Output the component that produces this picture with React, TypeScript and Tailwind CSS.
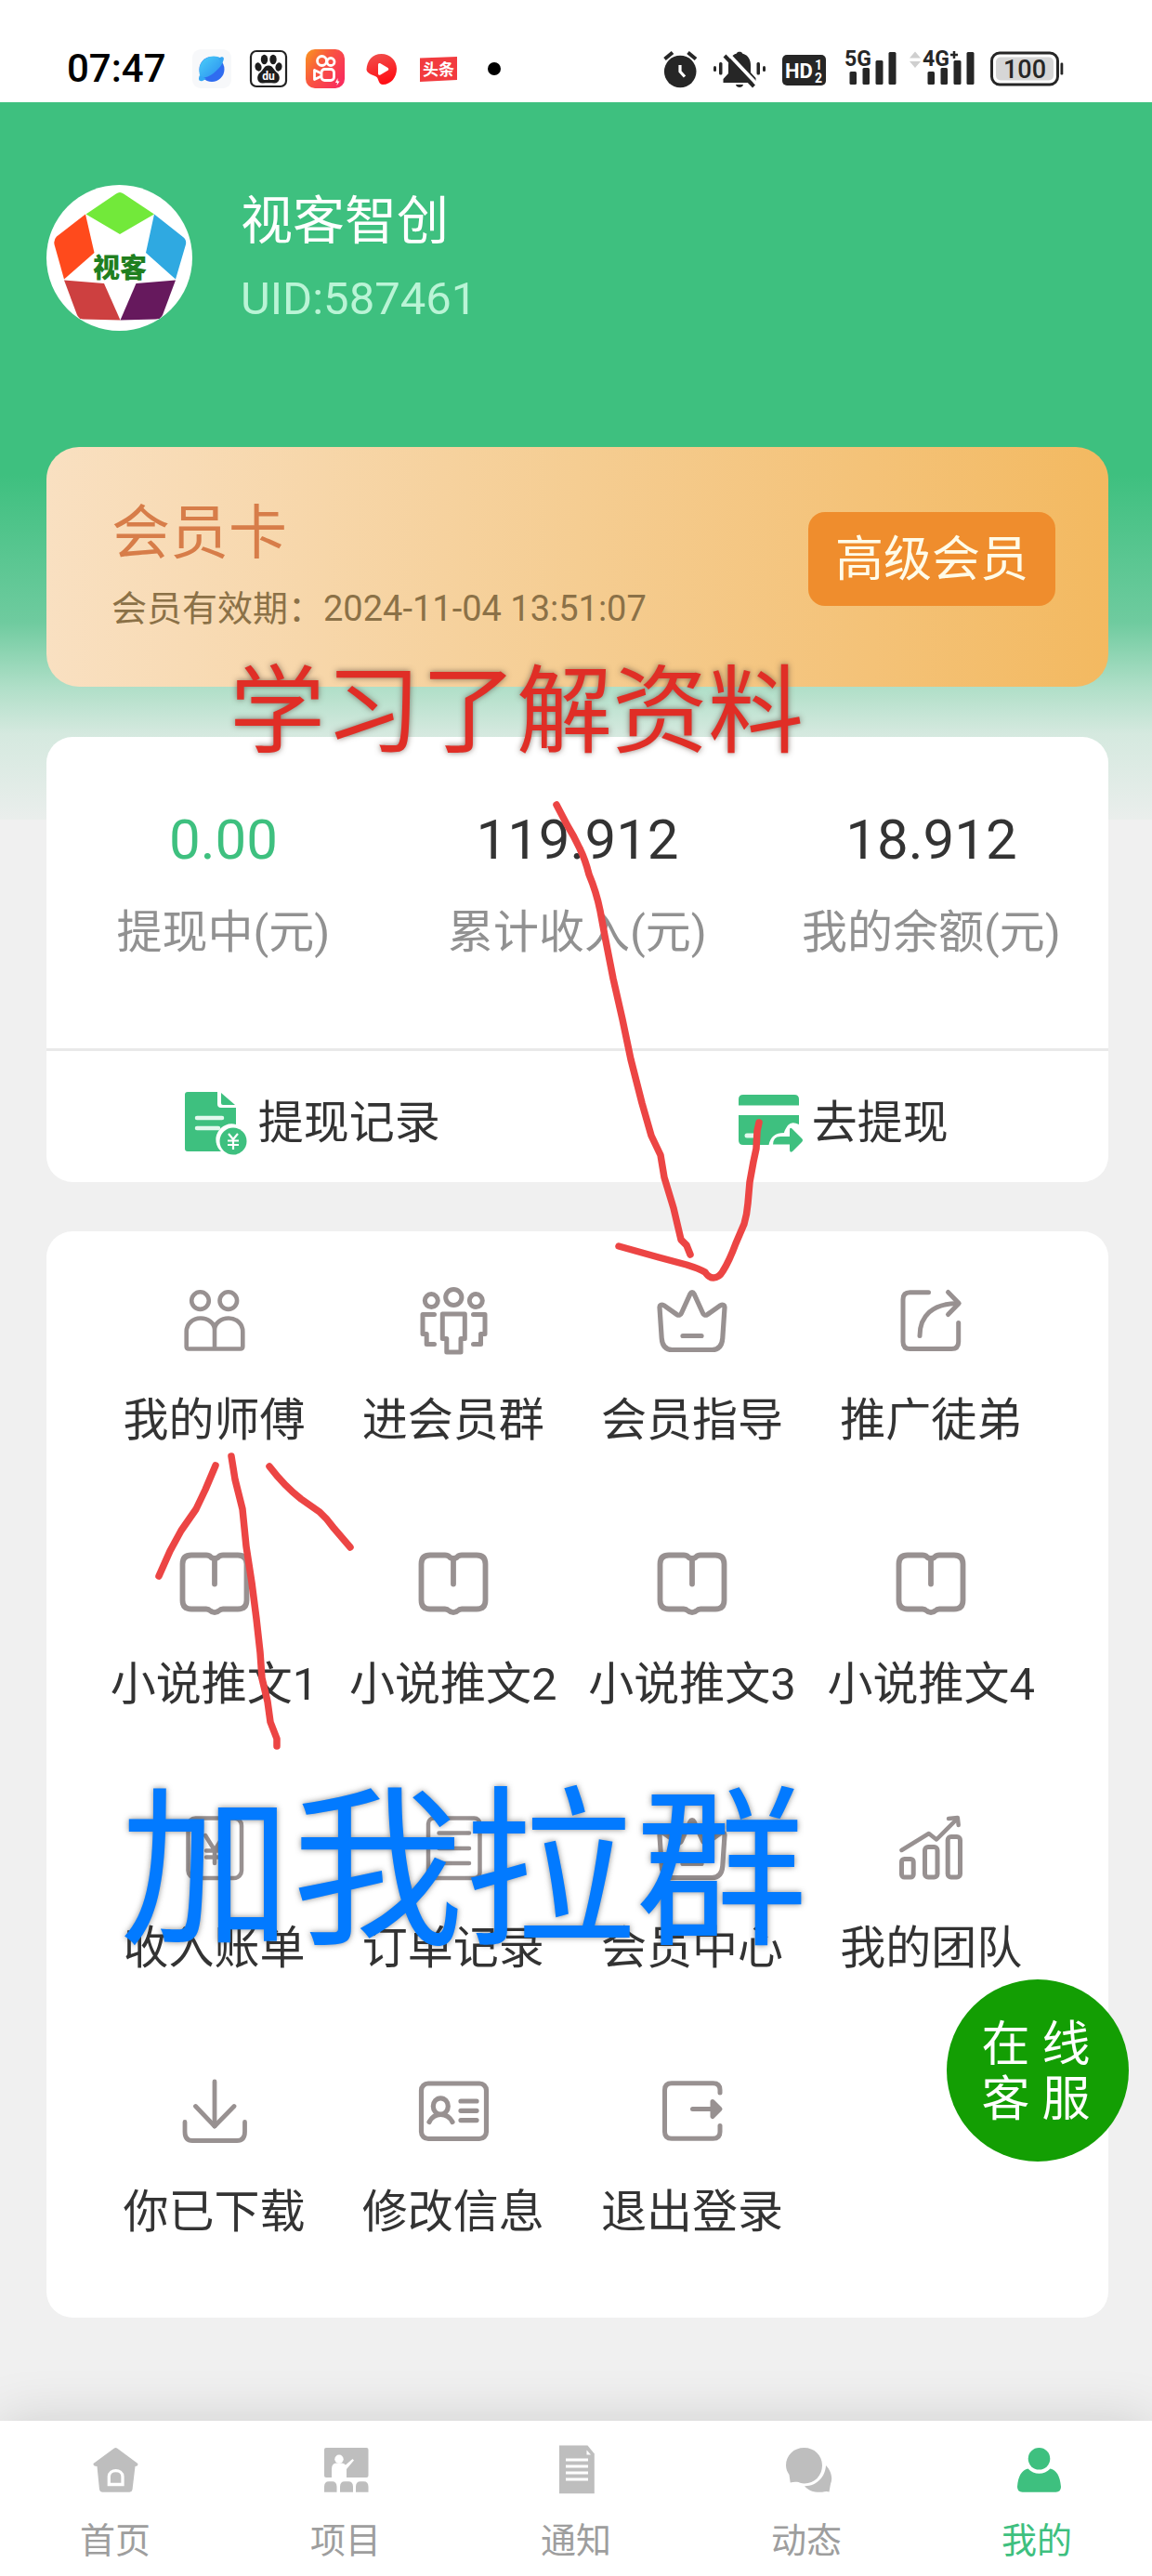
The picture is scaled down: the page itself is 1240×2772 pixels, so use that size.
import React from 'react'

type IconProps = { className?: string }

type MenuItem = {
  label: string
  icon: React.ReactNode
}

/* ---------- status bar ---------- */

function AppIcons() {
  return (
    <div className="flex items-center gap-[19px]">
      <svg viewBox="0 0 42 42" className="size-[42px]" aria-hidden="true">
        <defs>
          <linearGradient id="planet" x1="0" y1="0" x2="1" y2="1">
            <stop offset="0" stopColor="#4bd0f8" />
            <stop offset="1" stopColor="#2a8cf0" />
          </linearGradient>
        </defs>
        <rect width="42" height="42" rx="9" fill="#f7f8fa" />
        <circle cx="21" cy="21.500" r="13.500" fill="#2f6cf0" />
        <path d="M31 10 C24 5 12 8 8.500 17 C7 22 7 27 9.500 31 C19 31 29 22 32.500 13 Z" fill="url(#planet)" />
        <path d="M28 10 C32 7 35 8 33.500 12 C32 17 29 20 27 22 L30 13 Z" fill="#35a5f2" />
        <path d="M8 28 C6 32 7 35 11 34 L15 32 Z" fill="#33a8f4" />
      </svg>
      <svg viewBox="0 0 42 42" className="size-[42px]" aria-hidden="true">
        <rect x="2" y="2" width="38" height="38" rx="6" fill="#fff" stroke="#222" strokeWidth="2.200" />
        <g fill="#1d1d1d">
          <ellipse cx="16.500" cy="11" rx="3.700" ry="5.200" />
          <ellipse cx="26" cy="11" rx="3.700" ry="5.200" />
          <ellipse cx="10" cy="19" rx="3.500" ry="4.700" transform="rotate(-15 10 19)" />
          <ellipse cx="32" cy="19" rx="3.500" ry="4.700" transform="rotate(15 32 19)" />
          <path d="M21 17.500 C26 17.500 26 22 30 25 C35 29 33 37 27 36.500 C23 36 19 36 15 36.500 C9 37 7 29 12 25 C16 22 16 17.500 21 17.500 Z" />
        </g>
        <text x="21" y="33" textAnchor="middle" fontFamily="Roboto" fontSize="12" fontWeight="700" fill="#fff">du</text>
      </svg>
      <svg viewBox="0 0 42 42" className="size-[42px]" aria-hidden="true">
        <defs>
          <linearGradient id="kuai" x1="0" y1="0" x2="1" y2="0.700">
            <stop offset="0" stopColor="#f9971f" />
            <stop offset="0.450" stopColor="#f9573f" />
            <stop offset="1" stopColor="#f92d5c" />
          </linearGradient>
        </defs>
        <rect width="42" height="42" rx="10" fill="url(#kuai)" />
        <g fill="none" stroke="#fff" strokeWidth="2.800">
          <circle cx="17.500" cy="12.500" r="5" />
          <circle cx="27" cy="13.500" r="4" />
          <rect x="17" y="21.500" width="13.500" height="12" rx="3.500" />
          <path d="M17 26 L9.500 22.500 V32.500 L17 29" strokeLinejoin="round" />
        </g>
        <path d="M34.500 31 L32 36 H34 L33.500 39 L36.500 34.500 H34.500 Z" fill="#fff" />
      </svg>
      <svg viewBox="0 0 42 42" className="size-[42px]" aria-hidden="true">
        <defs>
          <linearGradient id="play" x1="0" y1="0" x2="0.300" y2="1">
            <stop offset="0" stopColor="#ef5350" />
            <stop offset="1" stopColor="#ff1016" />
          </linearGradient>
        </defs>
        <path d="M20.500 5 C30 5 37 12 37 21 C37 30 31 38 22 38 C18 38 18 34 16 30.500 C14 28 5 27 4.500 22 C5 12 11 5 20.500 5 Z" fill="url(#play)" />
        <path d="M17 16.500 C17 15 18.500 14.500 19.500 15.300 L27.500 20 C28.500 21 28.500 22 27.500 22.800 L19.500 27.500 C18 28.300 17 27.500 17 26 Z" fill="#fff" />
      </svg>
      <svg viewBox="0 0 42 42" className="size-[42px]" aria-hidden="true">
        <path d="M1 9.500 L41 8 V33 L1 35 Z" fill="#f23b3f" />
        <text x="21" y="28" textAnchor="middle" fontFamily="'Noto Sans CJK SC', sans-serif" fontSize="17" fontWeight="700" fill="#fff">头条</text>
      </svg>
    </div>
  )
}

function AlarmIcon() {
  return (
    <svg viewBox="0 0 38 42" className="h-[42px] w-[38px]" aria-hidden="true">
      <g stroke="#262626" strokeWidth="4">
        <path d="M1.500 10.500 L10 3.500" />
        <path d="M26.500 3.500 L35 10.500" />
      </g>
      <circle cx="18.200" cy="24" r="17.300" fill="#262626" />
      <path d="M18 17 V24 L23 29.500" fill="none" stroke="#fff" strokeWidth="3.200" />
    </svg>
  )
}

function MuteIcon() {
  return (
    <svg viewBox="0 0 58 42" className="h-[42px] w-[58px]" aria-hidden="true">
      <g fill="#262626">
        <path d="M25 4.500 C25 2 31 2 31 4.500 C38 6.500 40 12 40 17 V25 L45.500 31 V36 H10.500 V32 L16 26 V17 C16 11 19 6.500 25 4.500 Z" />
        <path d="M24 38 H32 C31.500 42 24.500 42 24 38 Z" />
        <rect x="0" y="18" width="3" height="6" rx="1.500" />
        <rect x="6" y="14" width="3.500" height="13.500" rx="1.500" />
        <rect x="46.500" y="14" width="3.500" height="13.500" rx="1.500" />
        <rect x="53" y="18" width="3" height="6" rx="1.500" />
      </g>
      <path d="M15 4 L47 38" stroke="#fff" strokeWidth="4" />
      <path d="M12 7 L43.500 40" stroke="#262626" strokeWidth="4" />
    </svg>
  )
}

function HdIcon() {
  return (
    <svg viewBox="0 0 50 42" className="h-[42px] w-[50px]" aria-hidden="true">
      <rect x="0" y="6" width="47" height="33" rx="5" fill="#262626" />
      <g fontFamily="Roboto" fontWeight="700" fill="#fff">
        <text x="3" y="30.500" fontSize="22">HD</text>
        <text x="35" y="21.500" fontSize="14">1</text>
        <text x="35" y="35.500" fontSize="14">2</text>
      </g>
    </svg>
  )
}

function SignalIcons() {
  return (
    <svg viewBox="0 0 142 42" className="h-[42px] w-[142px] overflow-visible" aria-hidden="true">
      <g fill="#262626">
        <rect x="6.500" y="24" width="7.500" height="14" rx="1.500" />
        <rect x="20.500" y="20" width="7.500" height="18" rx="1.500" />
        <rect x="34.500" y="12" width="8" height="26" rx="1.500" />
        <rect x="48.500" y="3" width="8" height="35" rx="1.500" />
        <rect x="90.500" y="24" width="7.500" height="14" rx="1.500" />
        <rect x="104.500" y="20" width="7.500" height="18" rx="1.500" />
        <rect x="118.500" y="12" width="8" height="26" rx="1.500" />
        <rect x="132.500" y="3" width="8" height="35" rx="1.500" />
        <g fontFamily="Roboto" fontWeight="700" fontSize="23" stroke="#fff" strokeWidth="2" paintOrder="stroke">
          <text x="1" y="18">5G</text>
          <text x="85" y="18">4G</text>
        </g>
        <path d="M115 6 H123 M119 2 V10" stroke="#262626" strokeWidth="2.500" />
      </g>
      <path d="M71 9.500 L77 2.500 L83 9.500 Z M71 13 L77 20 L83 13 Z" fill="#cfcfcf" />
    </svg>
  )
}

function BatteryIcon() {
  return (
    <svg viewBox="0 0 80 42" className="h-[42px] w-20" aria-hidden="true">
      <rect x="1.500" y="4" width="71" height="34" rx="8.500" fill="#fff" stroke="#262626" strokeWidth="3" />
      <rect x="6" y="8.500" width="62" height="25" rx="5" fill="#d6d6d6" />
      <rect x="75.500" y="14.500" width="2.800" height="13" rx="1.200" fill="#262626" />
      <text x="37" y="31" textAnchor="middle" fontFamily="Roboto" fontSize="27" fontWeight="500" fill="#262626">100</text>
    </svg>
  )
}

function StatusBar() {
  return (
    <div className="flex h-[110px] items-center justify-between bg-white pt-[38px] pr-[94px] pl-[72px]">
      <div className="flex items-center">
        <span className="text-[42px] leading-10 font-medium text-black">07:47</span>
        <div className="ml-7">
          <AppIcons />
        </div>
        <span className="ml-8 size-3.5 rounded-full bg-black" />
      </div>
      <div className="flex items-center gap-4">
        <AlarmIcon />
        <MuteIcon />
        <HdIcon />
        <SignalIcons />
        <BatteryIcon />
      </div>
    </div>
  )
}

/* ---------- profile ---------- */

function Avatar() {
  return (
    <svg viewBox="0 0 157 157" className="size-[157px] shrink-0 rounded-full bg-white" role="img" aria-label="视客">
      <path d="M75 9.500 Q79 6.500 83 9.500 L116 31.500 L79 53 L42.500 31.500 Z" fill="#72e93a" />
      <path d="M42 31.500 L51.500 73 L19 101.500 L8.500 64 Q7.500 59 11 55.500 Z" fill="#ff4a1c" />
      <path d="M116 31.500 L107 73 L139 101.500 L150 64 Q151 59 147 56 Z" fill="#2fa9e1" />
      <path d="M19 102.500 L62 106 L79.500 145.500 L39 144.500 Q35 144 33 140 Z" fill="#cd4040" />
      <path d="M139 102.500 L96.500 106 L79.500 145.500 L118 144.500 Q123 144 125 140 Z" fill="#66195d" />
      <text x="79" y="100" textAnchor="middle" fontFamily="'Noto Sans CJK SC', sans-serif" fontSize="29" fontWeight="900" fill="#1f7f1f">视客</text>
    </svg>
  )
}

function Profile() {
  return (
    <div className="flex items-center gap-[52px]">
      <Avatar />
      <div>
        <h1 className="text-[56px] leading-16 text-white">视客智创</h1>
        <p className="mt-6 text-[49px] leading-14 text-[#baf4d6]">UID:587461</p>
      </div>
    </div>
  )
}

function MemberCard() {
  return (
    <section className="mt-[125px] flex items-start justify-between rounded-[35px] bg-linear-to-r from-[#f9e0c1] via-[#f5cd92] to-[#f3b960] pt-[57px] pr-[57px] pb-15 pl-[70px]">
      <div>
        <h2 className="text-[63px] leading-[72px] text-[#d77d49]">会员卡</h2>
        <p className="mt-[21px] text-[38px] leading-12 text-[#8b7147]">会员有效期：2024-11-04 13:51:07</p>
      </div>
      <button type="button" className="mt-[13px] h-[101px] w-[266px] rounded-[18px] bg-[#ef8d2d] pt-0.5 text-[52px] leading-16 text-[#fffbe8]">
        高级会员
      </button>
    </section>
  )
}

/* ---------- wallet ---------- */

function RecordIcon() {
  return (
    <svg viewBox="0 0 72 72" className="size-[72px]" aria-hidden="true">
      <path d="M4 2 H36 V15 Q36 19 40 19 H56 V37 A17 17 0 0 0 40 66 H4 Q1 66 1 63 V5 Q1 2 4 2 Z" fill="#3ec07f" />
      <path d="M40 3 L55 16 H42 Q40 16 40 14 Z" fill="#3ec07f" />
      <path d="M14 30 H41 M14 41 H37" stroke="#e2f8ed" strokeWidth="4.500" strokeLinecap="round" />
      <circle cx="53" cy="55" r="14.500" fill="#3ec07f" />
      <path d="M48 47 L53 53 L58 47 M53 53 V64 M47 54.500 H59 M47 59 H59" fill="none" stroke="#fff" strokeWidth="2.200" />
    </svg>
  )
}

function CashOutIcon() {
  return (
    <svg viewBox="0 0 72 72" className="size-[72px]" aria-hidden="true">
      <path d="M6 5 H61 Q66 5 66 10 V16.500 H1 V10 Q1 5 6 5 Z" fill="#3ec07f" />
      <path d="M1 27 H66 V37 Q58 33 54 38 Q50 44 50 46 Q36 46 33.500 59 H6 Q1 59 1 54 Z" fill="#3ec07f" />
      <path d="M10 49 H20" stroke="#e2f8ed" strokeWidth="5" strokeLinecap="round" />
      <path d="M38 59 Q38 50 46 50 H56 V43 Q56 39 59 42 L69 52 Q71 54 69 56 L59 66 Q56 68 56 64 V58.500 H38 Z" fill="#3ec07f" />
    </svg>
  )
}

const stats = [
  { value: '0.00', label: '提现中(元)', active: true },
  { value: '119.912', label: '累计收入(元)', active: false },
  { value: '18.912', label: '我的余额(元)', active: false },
]

function WalletCard() {
  return (
    <section className="mt-[54px] rounded-[28px] bg-white">
      <div className="grid grid-cols-3 border-b-3 border-[#e9e9e9] pt-[75px] pb-24 text-center">
        {stats.map((item) => (
          <div key={item.label}>
            <p className={item.active ? 'text-[60px] leading-[72px] text-[#3ec07f]' : 'text-[60px] leading-[72px] text-[#333333]'}>
              {item.value}
            </p>
            <p className="mt-9 text-[49px] leading-14 text-[#919191]">{item.label}</p>
          </div>
        ))}
      </div>
      <div className="grid h-[141px] grid-cols-2 pt-3.5 text-[49px] text-[#333333]">
        <button type="button" className="flex items-center justify-center gap-2">
          <RecordIcon />
          提现记录
        </button>
        <button type="button" className="flex items-center justify-center gap-2">
          <CashOutIcon />
          去提现
        </button>
      </div>
    </section>
  )
}

/* ---------- menu ---------- */

function LineIcon({ children, width = 4.8 }: { children: React.ReactNode; width?: number }) {
  return (
    <svg
      viewBox="0 0 72 72"
      className="size-[72px] overflow-visible"
      fill="none"
      stroke="#989191"
      strokeWidth={width}
      strokeLinecap="round"
      strokeLinejoin="round"
      aria-hidden="true"
    >
      {children}
    </svg>
  )
}

const CoupleIcon = () => (
  <LineIcon width={4.6}>
    <circle cx="20.500" cy="14.600" r="9.300" />
    <circle cx="50.800" cy="14.600" r="9.300" />
    <path d="M36 66.500 V46 C36 39 29 33.500 21 33.500 C12 33.500 5.700 40 5.700 48 V64 Q5.700 66.500 8.200 66.500 H63.500 Q66.300 66.500 66.300 64 V48 C66.300 40 60 33.500 51 33.500 C43 33.500 36 39 36 46" />
  </LineIcon>
)

const GroupIcon = () => (
  <LineIcon width={5}>
    <circle cx="36.300" cy="11" r="8.600" />
    <circle cx="12.300" cy="14.600" r="7" />
    <circle cx="60.300" cy="14.600" r="7" />
    <path d="M24.300 29 H48.300 V55.500 H44 V70 H28.800 V55.500 H24.300 Z" />
    <path d="M15.500 29.500 H3 V50.500 H7.200 V61.500 H15.500" />
    <path d="M57.500 29.500 H70 V50.500 H65.500 V61.500 H57.500" />
  </LineIcon>
)

const CrownIcon = () => (
  <LineIcon width={5.2}>
    <path d="M36 5.500 C37 5.500 37.500 6.200 38 7.200 L47.500 28 C48.500 30.500 50.500 30.800 52.500 29.500 L66.500 19.700 C69 18.200 71.200 19.300 71 22 L68.800 55 C68.200 63 65 67.500 57.500 67.500 H14.500 C7 67.500 3.800 63 3.200 55 L1 22 C0.800 19.300 3 18.200 5.500 19.700 L19.500 29.500 C21.500 30.800 23.500 30.500 24.500 28 L34 7.200 C34.500 6.200 35 5.500 36 5.500 Z" />
    <path d="M26 52.500 H46" />
  </LineIcon>
)

const ShareIcon = () => (
  <LineIcon width={5}>
    <path d="M33.500 5.700 H13.500 Q6 5.700 6 13.200 V59 Q6 66.500 13.500 66.500 H58.200 Q65.700 66.500 65.700 59 V38.500" />
    <path d="M24 52.500 C24 31 38 17.500 65 17.500" />
    <path d="M54.500 5.500 L66.200 17.500 L54.500 29.500" />
  </LineIcon>
)

const BookIcon = () => (
  <LineIcon width={5.8}>
    <path d="M36 8 C34 8 32.500 7.400 31.500 6.200 C30.500 5 29.500 4.500 27 4.500 H11 Q1.500 4.500 1.500 14 V53 Q1.500 62.500 11 62.500 H27 C29 62.500 30 63 31 64.100 C33.500 66.700 38.500 66.700 41 64.100 C42 63 43 62.500 45 62.500 H61 Q70.500 62.500 70.500 53 V14 Q70.500 4.500 61 4.500 H45 C42.500 4.500 41.500 5 40.500 6.200 C39.500 7.400 38 8 36 8 Z" />
    <path d="M36 8 V35.500" />
  </LineIcon>
)

const BillIcon = () => (
  <LineIcon width={4.5}>
    <rect x="7.500" y="3.500" width="57.500" height="64.500" rx="8" />
    <path d="M26 22 L36 38 L46 22 M36 38 V52 M27 38.500 H45 M27 45.500 H45" />
  </LineIcon>
)

const OrderIcon = () => (
  <LineIcon width={4.5}>
    <rect x="9" y="3.500" width="55.500" height="64.500" rx="6" />
    <path d="M20.500 19.500 H53 M20.500 36 H53 M20.500 52 H53" />
  </LineIcon>
)

const TeamIcon = () => (
  <LineIcon width={5}>
    <rect x="4.500" y="47.500" width="12.700" height="19.500" rx="3" />
    <rect x="29.500" y="34.500" width="13.500" height="32.500" rx="3.500" />
    <rect x="54.200" y="23.500" width="13.300" height="43.500" rx="3.500" />
    <path d="M4.500 38 L33.800 20 L42 26.500 L64 4.500" strokeWidth="4.500" />
    <path d="M55 4 L64.800 3 L65.700 11" strokeWidth="4.500" />
  </LineIcon>
)

const DownloadIcon = () => (
  <LineIcon width={4.8}>
    <path d="M36 3 V51" />
    <path d="M15.500 29.500 L36 51 L57 29.500" />
    <path d="M4 46.500 V57 Q4 66.500 12 66.500 H60 Q68.500 66.500 68.500 57 V46.500" />
  </LineIcon>
)

const IdCardIcon = () => (
  <LineIcon width={5.2}>
    <rect x="1.500" y="5" width="70" height="59.500" rx="7.500" />
    <ellipse cx="22.300" cy="29.500" rx="8" ry="8.700" />
    <path d="M10 46.500 C13 40.500 17 38.500 22.300 38.500 C27.500 38.500 32 40.500 35 46.500" />
    <path d="M44 24 H61 M44 34.300 H61 M44 44.600 H61" />
  </LineIcon>
)

const ExitIcon = () => (
  <LineIcon width={5}>
    <path d="M66 15 V12 Q66 4.700 58.500 4.700 H14 Q6.500 4.700 6.500 12 V57 Q6.500 64.300 14 64.300 H58.500 Q66 64.300 66 57 V50.500" />
    <path d="M36.500 32.500 H60" />
    <path d="M58 24.500 L66 32.500 L58 40.500 Z" fill="#989191" />
  </LineIcon>
)

const menu: MenuItem[] = [
  { label: '我的师傅', icon: <CoupleIcon /> },
  { label: '进会员群', icon: <GroupIcon /> },
  { label: '会员指导', icon: <CrownIcon /> },
  { label: '推广徒弟', icon: <ShareIcon /> },
  { label: '小说推文1', icon: <BookIcon /> },
  { label: '小说推文2', icon: <BookIcon /> },
  { label: '小说推文3', icon: <BookIcon /> },
  { label: '小说推文4', icon: <BookIcon /> },
  { label: '收入账单', icon: <BillIcon /> },
  { label: '订单记录', icon: <OrderIcon /> },
  { label: '会员中心', icon: <CrownIcon /> },
  { label: '我的团队', icon: <TeamIcon /> },
  { label: '你已下载', icon: <DownloadIcon /> },
  { label: '修改信息', icon: <IdCardIcon /> },
  { label: '退出登录', icon: <ExitIcon /> },
]

function MenuCard() {
  return (
    <section className="mt-[53px] grid grid-cols-4 gap-y-[108px] rounded-[28px] bg-white pt-15 pr-[62px] pb-[81px] pl-[52px]">
      {menu.map((item) => (
        <button key={item.label} type="button" className="flex flex-col items-center gap-10">
          {item.icon}
          <span className="text-[49px] leading-16 whitespace-nowrap text-[#333333]">{item.label}</span>
        </button>
      ))}
    </section>
  )
}

/* ---------- tab bar ---------- */

function HomeTabIcon({ className }: IconProps) {
  return (
    <svg viewBox="0 0 56 56" className={className} fill="currentColor" aria-hidden="true">
      <path d="M27 4.500 Q28.500 3.300 30 4.500 L52.300 21 Q53 24 49.500 24 L46.500 49 Q46 51.700 43.500 51.700 H14 Q11.500 51.700 11 49 L8.500 24 Q4 24 4.500 21 Z" />
      <path d="M21.300 43.500 V35 C21.300 26.500 36 26.500 36 35 V43.500 Z" stroke="#fff" strokeWidth="3.300" />
    </svg>
  )
}

function ProjectTabIcon({ className }: IconProps) {
  return (
    <svg viewBox="0 0 56 56" className={className} fill="currentColor" aria-hidden="true">
      <rect x="5" y="4" width="47.500" height="32" rx="2" />
      <circle cx="21" cy="16.300" r="4.700" fill="#fff" />
      <path d="M13 36.500 V27 Q13 20.500 18 20.500 H24 Q26 20.500 28 22.500 L35.500 16 L37 17.500 L29 27 V36.500 Z" fill="#fff" />
      <path d="M5 51.700 V46 Q5 40.300 10 40.300 H13.500 Q18.500 40.300 18.500 46 V51.700 Z" />
      <path d="M22 51.700 V46 Q22 40.300 27 40.300 H31 Q36 40.300 36 46 V51.700 Z" />
      <path d="M39 51.700 V46 Q39 40.300 44 40.300 H47.500 Q52.500 40.300 52.500 46 V51.700 Z" />
    </svg>
  )
}

function NoticeTabIcon({ className }: IconProps) {
  return (
    <svg viewBox="0 0 56 56" className={className} fill="currentColor" aria-hidden="true">
      <path d="M10 1.500 H40.500 L47.800 10.500 V53.300 H10 Z" />
      <path d="M39.500 6.500 V11.500 H44 Z" fill="#fff" />
      <path d="M17 17 H41 M17 24 H41 M17 31 H41 M17 38 H41" stroke="#fff" strokeWidth="3" />
    </svg>
  )
}

function ChatTabIcon({ className }: IconProps) {
  return (
    <svg viewBox="0 0 56 56" className={className} fill="currentColor" aria-hidden="true">
      <path d="M25.500 4 C36.500 4 45 12 45 23 C45 34 36.500 42.500 26 42.500 C22 42.500 20 41 18 40.800 Q14 40.500 10.700 41.500 L9.500 33 C7.500 30 6 27 6 23 C6 12 14.500 4 25.500 4 Z" />
      <path d="M49 23 C54 28 57 36 54 43 L52.500 51.500 C50 50.500 48 51 45 51.700 C37 52.500 30 50 26 45.200 C39 45.500 48.500 35 49 23 Z" />
    </svg>
  )
}

function MeTabIcon({ className }: IconProps) {
  return (
    <svg viewBox="0 0 56 56" className={className} fill="currentColor" aria-hidden="true">
      <circle cx="30.500" cy="15.800" r="11.800" />
      <path d="M18.500 26.500 C25 33.500 36 33.500 42.500 26.500 C49 28 53 34 54 46 Q54 51.700 48.500 51.700 H12.500 Q7 51.700 7 46 C8 34 12 28 18.500 26.500 Z" />
    </svg>
  )
}

const tabs = [
  { label: '首页', Icon: HomeTabIcon, active: false },
  { label: '项目', Icon: ProjectTabIcon, active: false },
  { label: '通知', Icon: NoticeTabIcon, active: false },
  { label: '动态', Icon: ChatTabIcon, active: false },
  { label: '我的', Icon: MeTabIcon, active: true },
]

function TabBar() {
  return (
    <nav className="relative grid grid-cols-5 bg-white pt-[25px] pb-3.5 shadow-[0_0_60px_rgba(0,0,0,0.14)]">
      {tabs.map(({ label, Icon, active }) => (
        <a key={label} href="#" aria-current={active ? 'page' : undefined} className="flex flex-col items-center gap-6">
          <Icon className={active ? 'size-14 text-[#3ec07f]' : 'size-14 text-[#bebebe]'} />
          <span className={active ? 'text-[38px] leading-12 text-[#3ec07f]' : 'text-[38px] leading-12 text-[#9e9e9e]'}>{label}</span>
        </a>
      ))}
    </nav>
  )
}

/* ---------- hand-drawn notes on top of the page ---------- */

function Notes() {
  return (
    <div className="pointer-events-none absolute inset-0 overflow-hidden">
      <svg viewBox="0 0 1240 2772" className="absolute top-0 left-0 w-full" fill="none" stroke="#ec4544" strokeWidth="7.500" strokeLinecap="round" strokeLinejoin="round" aria-hidden="true">
        <path d="M599 866 L610 887 Q618 900 624 913 Q630 925 634 941 Q642 960 646 980 L651 1007 L660 1053 L670 1097 L679 1140 L691 1187 L701 1222 L711 1243 L715 1267 L725 1300 L733 1334 L739 1340 L743 1350" />
        <path d="M666 1341 L709 1353 L739 1361 Q752 1365 759 1369 Q763 1375 768 1375 Q774 1375 778 1368 Q785 1357 792 1338 L801 1317 Q804 1307 805 1295 L807 1272 L811 1250 L814 1236 L815 1217 L817 1208" />
        <path d="M232 1577 L221 1603 L211 1624 L195 1647 L183 1669 L171 1696" />
        <path d="M249 1567 L253 1592 L261 1624 L265 1664 L271 1703 L276 1742 L280 1778 L282 1806 L288 1831 L291 1853 L298 1871 L298 1879" />
        <path d="M290 1578 Q306 1599 324 1613 L344 1627 Q352 1634 359 1644 L377 1665" />
      </svg>
      <p className="absolute top-[707px] left-[247px] text-[103px] leading-[120px] whitespace-nowrap text-[#e02e26] [text-shadow:0_0_6px_rgba(90,70,60,0.7)]">
        学习了解资料
      </p>
      <p className="absolute top-[1915px] left-[129px] text-[185px] leading-[200px] whitespace-nowrap text-[#027aff] [text-shadow:0_0_6px_rgba(60,60,60,0.6)]">
        加我拉群
      </p>
    </div>
  )
}

export default function App() {
  return (
    <div className="relative w-full bg-[#f0f0f0] font-['Roboto','Noto_Sans_CJK_SC',sans-serif]">
      <StatusBar />
      <main className="bg-[linear-gradient(to_bottom,#3ec07f_400px,#6fcb9f_560px,#b0dfc8_630px,#d5e9df_680px,#eaeeec_772px,#f0f0f0_772px)] pt-[89px] pr-[47px] pb-[111px] pl-[50px]">
        <Profile />
        <MemberCard />
        <WalletCard />
        <MenuCard />
      </main>
      <TabBar />
      <Notes />
      <button
        type="button"
        className="absolute right-[25px] bottom-[446px] size-[196px] rounded-full bg-[#139e03] pt-1 pr-1 text-[52px] leading-[59px] text-white"
      >
        在 线
        <br />客 服
      </button>
    </div>
  )
}
